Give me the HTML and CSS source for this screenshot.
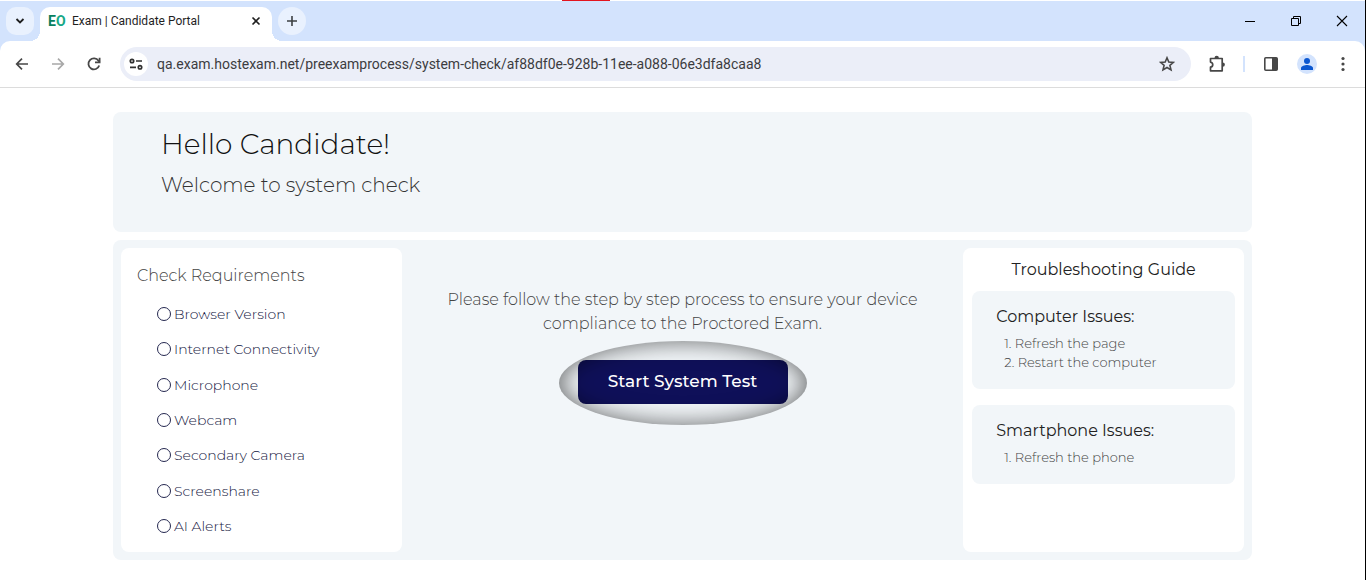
FILE: index.html
```html
<!DOCTYPE html>
<html lang="en">
<head>
<meta charset="utf-8">
<meta name="viewport" content="width=device-width, initial-scale=1">
<title>Exam | Candidate Portal</title>
<link rel="stylesheet" href="styles.css">
</head>
<body>
<div class="window">
  <div class="top-edge"><span class="top-edge-mark"></span></div>
  <header class="browser">
    <div class="tab-strip">
      <button class="tab-search" aria-label="Search tabs"><svg width="10" height="10" viewBox="0 0 10 10" fill="none" stroke="#1f1f1f" stroke-width="1.8"><path d="M1.5 3 5 6.500 8.500 3"/></svg></button>
      <div class="tab">
        <span class="favicon" aria-hidden="true"><span class="favicon-e">E</span><span class="favicon-o">O</span></span>
        <span class="tab-title">Exam | Candidate Portal</span>
        <button class="tab-close" aria-label="Close tab"><svg width="10" height="10" viewBox="0 0 10 10" stroke="#1f1f1f" stroke-width="1.6"><path d="M1.500 1.500l7 7M8.500 1.500l-7 7"/></svg></button>
      </div>
      <button class="new-tab" aria-label="New tab"><svg width="12" height="12" viewBox="0 0 12 12" stroke="#3c4043" stroke-width="1.6"><path d="M6 1v10M1 6h10"/></svg></button>
      <div class="window-controls">
        <button class="win-button" aria-label="Minimize"><svg width="12" height="12" viewBox="0 0 12 12" fill="none" stroke="#000"><path d="M1 6.500h10"/></svg></button>
        <button class="win-button" aria-label="Restore"><svg width="12" height="12" viewBox="0 0 12 12" fill="none" stroke="#000"><path d="M1.500 3.500h7v7h-7zM3.500 3.500v-2h7v7h-2"/></svg></button>
        <button class="win-button" aria-label="Close"><svg width="12" height="12" viewBox="0 0 12 12" fill="none" stroke="#000" stroke-width="1.1"><path d="M1 1l10 10M11 1 1 11"/></svg></button>
      </div>
    </div>
    <div class="toolbar">
      <div class="nav-buttons">
        <button class="tool" aria-label="Back"><svg width="14" height="14" viewBox="0 0 14 14" fill="none" stroke="#474747" stroke-width="1.700"><path d="M13 7H2M7 1.700 1.700 7 7 12.300"/></svg></button>
        <button class="tool" aria-label="Forward"><svg width="14" height="14" viewBox="0 0 14 14" fill="none" stroke="#a8a8a8" stroke-width="1.700"><path d="M1 7h11M7 1.700 12.300 7 7 12.300"/></svg></button>
        <button class="tool" aria-label="Reload"><svg width="14" height="14" viewBox="0 0 14 14" fill="none" stroke="#474747" stroke-width="1.800"><path d="M12.200 8.500A5.500 5.500 0 1 1 11.500 3.800L12.600 5"/><path d="M12.600.8v4.600H8"/></svg></button>
      </div>
      <div class="address">
        <button class="site-info" aria-label="Site information"><svg width="14" height="14" viewBox="0 0 14 14" fill="none" stroke="#303030" stroke-width="1.700"><circle cx="3" cy="4" r="1.700"/><path d="M7 4h6M1 10.300h6"/><circle cx="11" cy="10.300" r="1.700"/></svg></button>
        <input class="url" type="text" aria-label="Address" value="qa.exam.hostexam.net/preexamprocess/system-check/af88df0e-928b-11ee-a088-06e3dfa8caa8">
        <button class="bookmark" aria-label="Bookmark"><svg width="16" height="16" viewBox="0 0 16 16" fill="none" stroke="#474747" stroke-width="1.600"><path d="M8 1.800 9.800 6l4.600.4-3.500 3 1.100 4.500L8 11.500l-4 2.400 1.100-4.500-3.500-3L6.200 6z"/></svg></button>
      </div>
      <div class="tools">
        <button class="tool" aria-label="Extensions"><svg width="18" height="18" viewBox="0 0 18 18" fill="none" stroke="#474747" stroke-width="1.700" stroke-linejoin="round"><path d="M2.500 3.500H14.200V15.800H2.500V12.200C5.500 11.500 5.500 7.800 2.500 7.100z"/><path fill="#474747" stroke="none" d="M6.500 3a2.200 2.200 0 0 1 4.400 0zM14.700 7.400a2.200 2.200 0 0 1 0 4.400z"/></svg></button>
        <span class="divider"></span>
        <button class="tool" aria-label="Side panel"><svg width="14" height="14" viewBox="0 0 14 14"><rect x=".8" y=".8" width="12.400" height="12.400" rx="1" fill="none" stroke="#474747" stroke-width="1.600"/><path fill="#474747" d="M8 1h5v12H8z"/></svg></button>
        <button class="tool avatar" aria-label="Profile"><svg width="20" height="20" viewBox="0 0 20 20"><circle cx="10" cy="10" r="10" fill="#d3e3fd"/><circle cx="10" cy="7" r="3" fill="#0b57d0"/><path fill="#0b57d0" d="M4 16v-2c0-2 4-3 6-3s6 1 6 3v2z"/></svg></button>
        <button class="tool" aria-label="Menu"><svg width="4" height="16" viewBox="0 0 4 16" fill="#474747"><circle cx="2" cy="2.500" r="1.600"/><circle cx="2" cy="8" r="1.600"/><circle cx="2" cy="13.500" r="1.600"/></svg></button>
      </div>
    </div>
  </header>

  <main class="page">
    <section class="hero">
      <h1>Hello Candidate!</h1>
      <p>Welcome to system check</p>
    </section>
    <div class="content">
      <section class="panel requirements">
        <h2>Check Requirements</h2>
        <ul class="checks">
          <li><label><input type="radio">Browser Version</label></li>
          <li><label><input type="radio">Internet Connectivity</label></li>
          <li><label><input type="radio">Microphone</label></li>
          <li><label><input type="radio">Webcam</label></li>
          <li><label><input type="radio">Secondary Camera</label></li>
          <li><label><input type="radio">Screenshare</label></li>
          <li><label><input type="radio">AI Alerts</label></li>
        </ul>
      </section>
      <section class="start">
        <p>Please follow the step by step process to ensure your device compliance to the Proctored Exam.</p>
        <div class="spotlight"><button class="start-button">Start System Test</button></div>
      </section>
      <aside class="panel guide">
        <h2>Troubleshooting Guide</h2>
        <section class="issue">
          <h3>Computer Issues:</h3>
          <ol><li>Refresh the page</li><li>Restart the computer</li></ol>
        </section>
        <section class="issue">
          <h3>Smartphone Issues:</h3>
          <ol><li>Refresh the phone</li></ol>
        </section>
      </aside>
    </div>
  </main>
</div>
</body>
</html>
```
FILE: styles.css
```css
* { box-sizing: border-box; }

body {
  margin: 0;
  background: #fff;
  font-family: Montserrat, Inter, sans-serif;
  font-weight: 300;
}

h1, h2, h3, p, ul, ol { margin: 0; padding: 0; font-weight: 300; }
ul, ol { list-style: none; }

button {
  display: flex;
  align-items: center;
  justify-content: center;
  padding: 0;
  border: 0;
  background: none;
  font: inherit;
  cursor: pointer;
}

.window { min-height: 100vh; border-right: 1px solid #000; }

.top-edge { display: flex; justify-content: center; height: 1px; padding-right: 193px; }
.top-edge-mark { width: 48px; background: #e3141e; }

.browser { background: #d3e3fd; font-family: Roboto, sans-serif; font-weight: 400; }

.tab-strip { display: flex; height: 40px; padding-left: 6px; }
.tab-search { width: 28px; height: 28px; margin-top: 6px; border-radius: 10px; background: #e9f1fe; }
.tab {
  position: relative;
  display: flex;
  align-items: center;
  width: 232px;
  height: 34px;
  margin: 6px 6px 0;
  padding: 0 8px 6px;
  border-radius: 10px 10px 0 0;
  background: #fff;
}
.tab::before, .tab::after {
  content: "";
  position: absolute;
  bottom: 0;
  width: 10px;
  height: 10px;
}
.tab::before { right: 100%; background: radial-gradient(circle at 0 0, transparent 10px, #fff 10px); }
.tab::after { left: 100%; background: radial-gradient(circle at 100% 0, transparent 10px, #fff 10px); }
.favicon { display: flex; width: 24px; font: 700 14px/20px Roboto, sans-serif; }
.favicon-e { color: #08805e; }
.favicon-o { color: #16a886; }
.tab-title { flex: 1; color: #1f1f1f; font-size: 12px; line-height: 16px; }
.tab-close { width: 16px; height: 16px; }
.new-tab { width: 28px; height: 28px; margin-top: 6px; border-radius: 50%; background: #e9f1fe; }
.window-controls { display: flex; margin-left: auto; }
.win-button { width: 46px; height: 40px; }

.toolbar {
  display: flex;
  align-items: center;
  height: 47px;
  padding-left: 4px;
  border-bottom: 1px solid #dcdcdc;
  border-radius: 10px 10px 0 0;
  background: #fff;
}
.nav-buttons { display: flex; }
.tool { width: 36px; height: 34px; }
.address {
  display: flex;
  flex: 1;
  align-items: center;
  height: 34px;
  margin-left: 8px;
  padding: 0 4px;
  border-radius: 17px;
  background: #ebeef8;
}
.site-info { width: 24px; height: 24px; border-radius: 50%; background: #fff; }
.url {
  flex: 1;
  min-width: 0;
  padding: 0 9px;
  border: 0;
  outline: 0;
  background: none;
  color: #3c3c3f;
  font: 14px/20px Roboto, sans-serif;
}
.bookmark { width: 40px; height: 34px; }
.tools { display: flex; align-items: center; padding: 0 4px 0 8px; }
.divider { width: 2px; height: 16px; margin: 0 8px; background: #d3e3fd; }

.page {
  max-width: 1139px;
  margin: 24px auto 20px;
}
.hero {
  min-height: 120px;
  padding: 12px 48px;
  border-radius: 8px;
  background: #f2f6f9;
}
.hero h1 { color: #111; font-size: 28px; line-height: 40px; }
.hero p { margin-top: 6px; color: #333; font-size: 20px; line-height: 30px; }

.content {
  display: grid;
  grid-template-columns: 1fr 2fr 1fr;
  min-height: 320px;
  margin-top: 8px;
  padding: 8px;
  border-radius: 8px;
  background: #f2f6f9;
}
.panel { border-radius: 8px; background: #fff; }
.panel h2 { font-size: 16px; line-height: 24px; }

.requirements { display: flex; flex-direction: column; padding: 16px; }
.requirements h2 { color: #444; }
.checks {
  display: flex;
  flex: 1;
  flex-direction: column;
  justify-content: space-between;
  padding: 16px 20px 0;
}
.checks label { display: flex; align-items: center; gap: 3px; color: #16193f; font-size: 14px; line-height: 20px; }
.checks input {
  width: 14px;
  height: 14px;
  margin: 0;
  border: 1px solid #252850;
  border-radius: 50%;
  appearance: none;
}

.start { display: flex; flex-direction: column; align-items: center; padding: 40px 40px 0; }
.start p { color: #444; font-size: 16px; line-height: 24px; text-align: center; }
.spotlight { position: relative; margin-top: 5px; padding: 19px 19px 21px; border-radius: 50%; }
.spotlight::after {
  content: "";
  position: absolute;
  inset: 0;
  border-radius: 50%;
  box-shadow: inset 0 0 24px rgba(0, 0, 0, .6);
  pointer-events: none;
}
.start-button {
  width: 210px;
  height: 44px;
  padding-bottom: 2px;
  border-radius: 8px;
  background: #0f1059;
  color: #fff;
  font-size: 17px;
  font-weight: 500;
}

.guide { padding: 10px 9px 9px; }
.guide h2 { color: #222; font-weight: 400; text-align: center; }
.issue { margin-top: 9px; padding: 14px 24px 17px; border-radius: 8px; background: #f2f6f9; }
.issue + .issue { margin-top: 16px; }
.issue h3 { color: #222; font-size: 16px; font-weight: 400; line-height: 24px; }
.issue ol { margin: 5px 0 0 8px; counter-reset: step; color: #444; font-size: 13px; line-height: 19px; }
.issue li { counter-increment: step; }
.issue li::before { content: counter(step) ". "; }
```
